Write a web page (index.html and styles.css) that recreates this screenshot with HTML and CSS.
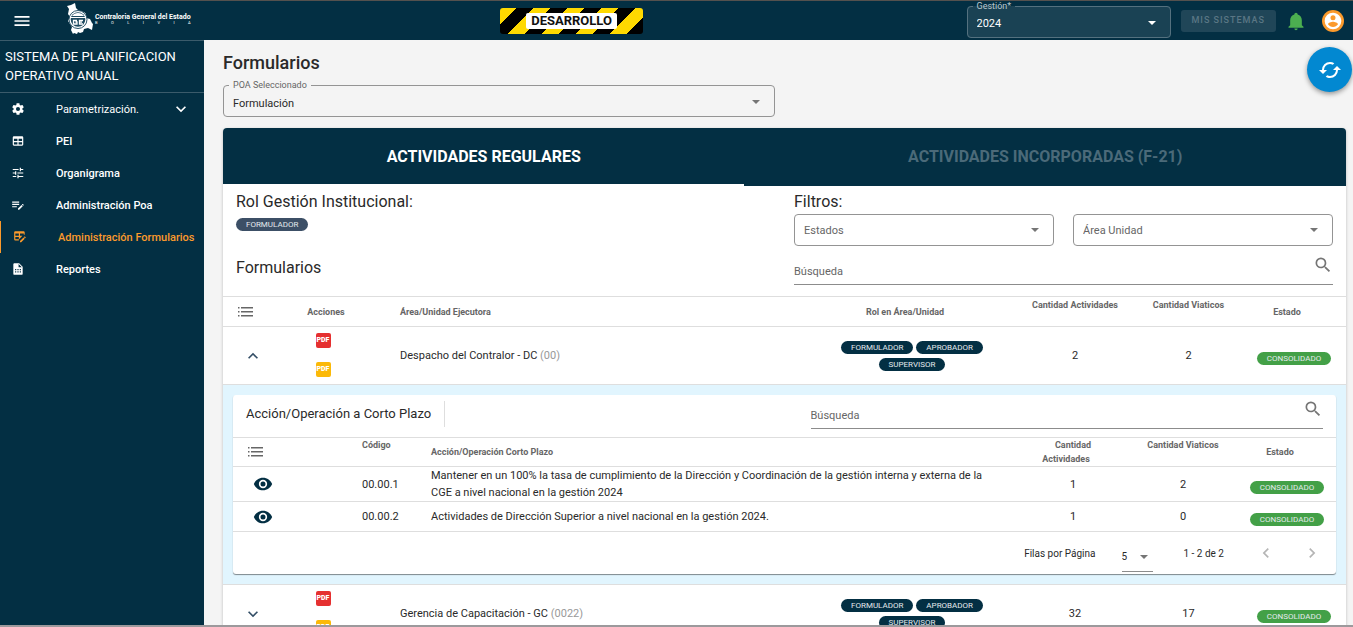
FILE: index.html
```html
<!DOCTYPE html>
<html lang="es">
<head>
<meta charset="utf-8">
<meta name="viewport" content="width=device-width, initial-scale=1">
<title>Sistema de Planificacion Operativo Anual</title>
<link rel="stylesheet" href="styles.css">
</head>
<body>
<svg class="sprite" aria-hidden="true">
  <symbol id="i-menu" viewBox="0 0 24 24"><path d="M3,6H21V8H3V6M3,11H21V13H3V11M3,16H21V18H3V16Z"/></symbol>
  <symbol id="i-cog" viewBox="0 0 24 24"><path d="M12,15.5A3.5,3.5 0 0,1 8.5,12A3.5,3.5 0 0,1 12,8.5A3.5,3.5 0 0,1 15.5,12A3.5,3.5 0 0,1 12,15.5M19.43,12.97C19.47,12.65 19.5,12.33 19.5,12C19.5,11.67 19.47,11.34 19.43,11L21.54,9.37C21.73,9.22 21.78,8.95 21.66,8.73L19.66,5.27C19.54,5.05 19.27,4.96 19.05,5.05L16.56,6.05C16.04,5.66 15.5,5.32 14.87,5.07L14.5,2.42C14.46,2.18 14.25,2 14,2H10C9.75,2 9.54,2.18 9.5,2.42L9.13,5.07C8.5,5.32 7.96,5.66 7.44,6.05L4.95,5.05C4.73,4.96 4.46,5.05 4.34,5.27L2.34,8.73C2.21,8.95 2.27,9.22 2.46,9.37L4.57,11C4.53,11.34 4.5,11.67 4.5,12C4.5,12.33 4.53,12.65 4.57,12.97L2.46,14.63C2.27,14.78 2.21,15.05 2.34,15.27L4.34,18.73C4.46,18.95 4.73,19.03 4.95,18.95L7.44,17.94C7.96,18.34 8.5,18.68 9.13,18.93L9.5,21.58C9.54,21.82 9.75,22 10,22H14C14.25,22 14.46,21.82 14.5,21.58L14.87,18.93C15.5,18.67 16.04,18.34 16.56,17.94L19.05,18.95C19.27,19.03 19.54,18.95 19.66,18.73L21.66,15.27C21.78,15.05 21.73,14.78 21.54,14.63L19.43,12.97Z"/></symbol>
  <symbol id="i-table" viewBox="0 0 24 24"><path d="M5,4H19A2,2 0 0,1 21,6V18A2,2 0 0,1 19,20H5A2,2 0 0,1 3,18V6A2,2 0 0,1 5,4M5,8V12H11V8H5M13,8V12H19V8H13M5,14V18H11V14H5M13,14V18H19V14H13Z"/></symbol>
  <symbol id="i-tune" viewBox="0 0 24 24"><path d="M3,17V19H9V17H3M3,5V7H13V5H3M13,21V19H21V17H13V15H11V21H13M7,9V11H3V13H7V15H9V9H7M21,13V11H11V13H21M15,9H17V7H21V5H17V3H15V9Z"/></symbol>
  <symbol id="i-list-edit" viewBox="0 0 24 24"><path d="M2,6V8H14V6H2M2,10V12H14V10H2M2,14V16H10V14H2M20.04,10.13C19.9,10.13 19.76,10.19 19.65,10.3L18.65,11.3L20.7,13.35L21.7,12.35C21.92,12.14 21.92,11.79 21.7,11.58L20.42,10.3C20.31,10.19 20.18,10.13 20.04,10.13M18.07,11.88L12,17.94V20H14.06L20.12,13.93L18.07,11.88Z"/></symbol>
  <symbol id="i-table-edit" viewBox="0 0 24 24"><path d="M21.7,13.35L20.7,14.35L18.65,12.3L19.65,11.3C19.86,11.09 20.21,11.09 20.42,11.3L21.7,12.58C21.91,12.79 21.91,13.14 21.7,13.35M12,18.94L18.07,12.88L20.12,14.93L14.06,21H12V18.94M4,2H18A2,2 0 0,1 20,4V8.17C19.5,8.06 19,8.1 18.5,8.27V6H12V10H16.17L12.17,14H12V14.17L10,16.17V18H4A2,2 0 0,1 2,16V4A2,2 0 0,1 4,2M4,6V10H10V6H4M4,12V16H10V12H4Z"/></symbol>
  <symbol id="i-file-table" viewBox="0 0 24 24"><path fill-rule="evenodd" d="M14,2H6C4.89,2 4,2.89 4,4V20A2,2 0 0,0 6,22H18A2,2 0 0,0 20,20V8L14,2M13,9V3.5L18.5,9H13M7,12H9V14H7V12M11,12H13V14H11V12M15,12H17V14H15V12M7,16H9V18H7V16M11,16H13V18H11V16M15,16H17V18H15V16Z"/></symbol>
  <symbol id="i-down" viewBox="0 0 24 24"><path d="M7.41,8.58L12,13.17L16.59,8.58L18,10L12,16L6,10L7.41,8.58Z"/></symbol>
  <symbol id="i-up" viewBox="0 0 24 24"><path d="M7.41,15.41L12,10.83L16.59,15.41L18,14L12,8L6,14L7.41,15.41Z"/></symbol>
  <symbol id="i-left" viewBox="0 0 24 24"><path d="M15.41,16.58L10.83,12L15.41,7.41L14,6L8,12L14,18L15.41,16.58Z"/></symbol>
  <symbol id="i-right" viewBox="0 0 24 24"><path d="M8.59,16.58L13.17,12L8.59,7.41L10,6L16,12L10,18L8.59,16.58Z"/></symbol>
  <symbol id="i-bell" viewBox="0 0 24 24"><path d="M21,19V20H3V19L5,17V11C5,7.9 7.03,5.17 10,4.29C10,4.19 10,4.1 10,4A2,2 0 0,1 12,2A2,2 0 0,1 14,4C14,4.1 14,4.19 14,4.29C16.97,5.17 19,7.9 19,11V17L21,19M14,21A2,2 0 0,1 12,23A2,2 0 0,1 10,21"/></symbol>
  <symbol id="i-account" viewBox="0 0 24 24"><path d="M12,19.2C9.5,19.2 7.29,17.92 6,16C6.03,14 10,12.9 12,12.9C14,12.9 17.97,14 18,16C16.71,17.92 14.5,19.2 12,19.2M12,5A3,3 0 0,1 15,8A3,3 0 0,1 12,11A3,3 0 0,1 9,8A3,3 0 0,1 12,5M12,2A10,10 0 0,0 2,12A10,10 0 0,0 12,22A10,10 0 0,0 22,12C22,6.47 17.5,2 12,2Z"/></symbol>
  <symbol id="i-cached" viewBox="0 0 24 24"><path d="M19,8L15,12H18A6,6 0 0,1 12,18C11,18 10.03,17.75 9.2,17.3L7.74,18.76C8.97,19.54 10.43,20 12,20A8,8 0 0,0 20,12H23M6,12A6,6 0 0,1 12,6C13,6 13.97,6.25 14.8,6.7L16.26,5.24C15.03,4.46 13.57,4 12,4A8,8 0 0,0 4,12H1L5,16L9,12"/></symbol>
  <symbol id="i-magnify" viewBox="0 0 24 24"><path d="M9.5,3A6.5,6.5 0 0,1 16,9.5C16,11.11 15.41,12.59 14.44,13.73L14.71,14H15.5L20.5,19L19,20.5L14,15.5V14.71L13.73,14.44C12.59,15.41 11.11,16 9.5,16A6.5,6.5 0 0,1 3,9.5A6.5,6.5 0 0,1 9.5,3M9.5,5C7,5 5,7 5,9.5C5,12 7,14 9.5,14C12,14 14,12 14,9.5C14,7 12,5 9.5,5Z"/></symbol>
  <symbol id="i-eye" viewBox="0 0 24 24"><path d="M12,9A3,3 0 0,0 9,12A3,3 0 0,0 12,15A3,3 0 0,0 15,12A3,3 0 0,0 12,9M12,17A5,5 0 0,1 7,12A5,5 0 0,1 12,7A5,5 0 0,1 17,12A5,5 0 0,1 12,17M12,4.5C7,4.5 2.73,7.61 1,12C2.73,16.39 7,19.5 12,19.5C17,19.5 21.27,16.39 23,12C21.27,7.61 17,4.5 12,4.5Z"/></symbol>
  <symbol id="i-list" viewBox="0 0 16 10"><path d="M0,0h1.5v1.5H0zM3,0h12v1.5H3zM0,4h1.5v1.5H0zM3,4h12v1.5H3zM0,8h1.5v1.5H0zM3,8h12v1.5H3z"/></symbol>
</svg>

<header class="topbar">
  <div class="topbar-start">
    <button class="icon-btn" aria-label="Menú"><svg class="icon icon-20"><use href="#i-menu"/></svg></button>
    <a class="brand" href="#">
      <svg class="brand-map" viewBox="0 0 27 31" aria-hidden="true">
        <path fill="#fff" d="M1 3l4-1 4-2 1 5 3 3 5 1 2 2v4l4 1 2 4 1 1-1 6-4-2-4 1-1 3-3 1-2-1-1 2-3-1-1 1-2-4 1-3-2-3-2-3 2-4-2-3 1-5z"/>
        <circle cx="12" cy="16.500" r="9" fill="#fff" stroke="#2b566b"/>
        <circle cx="12" cy="16.500" r="7.300" fill="#1d4a60"/>
        <path fill="#fff" d="M6 13q2-3 6-3t6 3zM4 14h16v1H4z"/>
        <path fill="none" stroke="#fff" stroke-width="1.300" d="M11 17.500H7.500v3.500H11v-2H9.500M17 17.500h-3.500V21H17M13.500 19.200H16"/>
      </svg>
      <span class="brand-text">
        <span class="brand-name">Contraloria General del Estado</span>
        <span class="brand-country"><span>B</span><span>O</span><span>L</span><span>I</span><span>V</span><span>I</span><span>A</span></span>
      </span>
    </a>
  </div>
  <div class="env-tape"><span class="env-label">DESARROLLO</span></div>
  <div class="topbar-tools">
    <fieldset class="field field-dark">
      <legend><label for="gestion">Gestión*</label></legend>
      <select id="gestion"><option>2024</option></select>
    </fieldset>
    <button class="systems-btn" disabled>MIS SISTEMAS</button>
    <button class="icon-btn bell-btn" aria-label="Notificaciones"><svg class="icon icon-20"><use href="#i-bell"/></svg></button>
    <button class="icon-btn avatar-btn" aria-label="Cuenta"><svg class="icon icon-20"><use href="#i-account"/></svg></button>
  </div>
</header>

<div class="layout">
  <nav class="sidebar" aria-label="Principal">
    <p class="system-name">SISTEMA DE PLANIFICACION OPERATIVO ANUAL</p>
    <ul class="nav-list">
      <li><a class="nav-item nav-group" href="#"><svg class="icon icon-14"><use href="#i-cog"/></svg><span>Parametrización.</span><svg class="icon icon-20 nav-chevron"><use href="#i-down"/></svg></a></li>
      <li><a class="nav-item" href="#"><svg class="icon icon-14"><use href="#i-table"/></svg><span>PEI</span></a></li>
      <li><a class="nav-item" href="#"><svg class="icon icon-14"><use href="#i-tune"/></svg><span>Organigrama</span></a></li>
      <li><a class="nav-item" href="#"><svg class="icon icon-14"><use href="#i-list-edit"/></svg><span>Administración Poa</span></a></li>
      <li><a class="nav-item is-active" href="#" aria-current="page"><svg class="icon icon-14"><use href="#i-table-edit"/></svg><span>Administración Formularios</span></a></li>
      <li><a class="nav-item" href="#"><svg class="icon icon-14"><use href="#i-file-table"/></svg><span>Reportes</span></a></li>
    </ul>
  </nav>

  <main class="content">
    <h1>Formularios</h1>
    <fieldset class="field poa-field">
      <legend><label for="poa">POA Seleccionado</label></legend>
      <select id="poa"><option>Formulación</option></select>
    </fieldset>

    <section class="card">
      <div class="tabs" role="tablist">
        <button class="tab is-selected" role="tab" aria-selected="true">ACTIVIDADES REGULARES</button>
        <button class="tab" role="tab" aria-selected="false">ACTIVIDADES INCORPORADAS (F-21)</button>
      </div>

      <div class="card-head">
        <div class="head-left">
          <h2>Rol Gestión Institucional:</h2>
          <span class="chip chip-slate">FORMULADOR</span>
          <h2 class="list-title">Formularios</h2>
        </div>
        <div class="head-right">
          <h2>Filtros:</h2>
          <div class="filters">
            <div class="field"><select aria-label="Estados"><option>Estados</option></select></div>
            <div class="field"><select aria-label="Área Unidad"><option>Área Unidad</option></select></div>
          </div>
          <div class="search"><input type="text" placeholder="Búsqueda" aria-label="Búsqueda"><svg class="icon icon-20"><use href="#i-magnify"/></svg></div>
        </div>
      </div>

      <table class="grid">
        <colgroup><col class="w-toggle"><col class="w-actions"><col><col class="w-role"><col class="w-activities"><col class="w-travel"><col class="w-status"></colgroup>
        <thead>
          <tr>
            <th class="list-cell"><svg class="icon list-icon" role="img" aria-label="Columnas"><use href="#i-list"/></svg></th>
            <th>Acciones</th>
            <th class="area-cell">Área/Unidad Ejecutora</th>
            <th class="sortable">Rol en Área/Unidad</th>
            <th class="sortable narrow">Cantidad Actividades</th>
            <th class="sortable narrow">Cantidad Viaticos</th>
            <th class="sortable">Estado</th>
          </tr>
        </thead>
        <tbody>
          <tr class="unit-row">
            <td><button class="icon-btn" aria-label="Contraer"><svg class="icon icon-20"><use href="#i-up"/></svg></button></td>
            <td><div class="pdf-stack"><button class="pdf pdf-red">PDF</button><button class="pdf pdf-amber">PDF</button></div></td>
            <td class="area-cell">Despacho del Contralor - DC <span class="code">(00)</span></td>
            <td><div class="chips"><span class="chip">FORMULADOR</span><span class="chip">APROBADOR</span><span class="chip">SUPERVISOR</span></div></td>
            <td>2</td>
            <td>2</td>
            <td class="status-cell"><span class="chip chip-green">CONSOLIDADO</span></td>
          </tr>
          <tr>
            <td class="expansion" colspan="7">
              <div class="subcard">
                <div class="subcard-head">
                  <h3>Acción/Operación a Corto Plazo</h3>
                  <div class="search"><input type="text" placeholder="Búsqueda" aria-label="Búsqueda de acciones"><svg class="icon icon-20"><use href="#i-magnify"/></svg></div>
                </div>
                <table class="grid subgrid">
                  <colgroup><col class="s-view"><col class="s-code"><col><col class="s-count"><col class="s-count"><col class="s-status"></colgroup>
                  <thead>
                    <tr>
                      <th class="list-cell"><svg class="icon list-icon" role="img" aria-label="Columnas"><use href="#i-list"/></svg></th>
                      <th class="sortable text-left code-head">Código</th>
                      <th class="text-left">Acción/Operación Corto Plazo</th>
                      <th class="sortable narrow">Cantidad Actividades</th>
                      <th class="sortable narrow">Cantidad Viaticos</th>
                      <th class="sortable">Estado</th>
                    </tr>
                  </thead>
                  <tbody>
                    <tr>
                      <td class="view-cell"><button class="icon-btn" aria-label="Ver 00.00.1"><svg class="icon icon-20"><use href="#i-eye"/></svg></button></td>
                      <td class="text-left">00.00.1</td>
                      <td class="text-left action-cell">Mantener en un 100% la tasa de cumplimiento de la Dirección y Coordinación de la gestión interna y externa de la CGE a nivel nacional en la gestión 2024</td>
                      <td>1</td>
                      <td>2</td>
                      <td class="status-cell"><span class="chip chip-green">CONSOLIDADO</span></td>
                    </tr>
                    <tr>
                      <td class="view-cell"><button class="icon-btn" aria-label="Ver 00.00.2"><svg class="icon icon-20"><use href="#i-eye"/></svg></button></td>
                      <td class="text-left">00.00.2</td>
                      <td class="text-left action-cell">Actividades de Dirección Superior a nivel nacional en la gestión 2024.</td>
                      <td>1</td>
                      <td>0</td>
                      <td class="status-cell"><span class="chip chip-green">CONSOLIDADO</span></td>
                    </tr>
                  </tbody>
                </table>
                <div class="pager">
                  <label for="rows">Filas por Página</label>
                  <div class="rows-select"><select id="rows"><option>5</option></select></div>
                  <span class="range">1 - 2 de 2</span>
                  <button class="icon-btn" aria-label="Anterior" disabled><svg class="icon icon-20"><use href="#i-left"/></svg></button>
                  <button class="icon-btn" aria-label="Siguiente" disabled><svg class="icon icon-20"><use href="#i-right"/></svg></button>
                </div>
              </div>
            </td>
          </tr>
          <tr class="unit-row">
            <td><button class="icon-btn" aria-label="Expandir"><svg class="icon icon-20"><use href="#i-down"/></svg></button></td>
            <td><div class="pdf-stack"><button class="pdf pdf-red">PDF</button><button class="pdf pdf-amber">PDF</button></div></td>
            <td class="area-cell">Gerencia de Capacitación - GC <span class="code">(0022)</span></td>
            <td><div class="chips"><span class="chip">FORMULADOR</span><span class="chip">APROBADOR</span><span class="chip">SUPERVISOR</span></div></td>
            <td>32</td>
            <td>17</td>
            <td class="status-cell"><span class="chip chip-green">CONSOLIDADO</span></td>
          </tr>
        </tbody>
      </table>
    </section>
  </main>
</div>

<button class="fab" aria-label="Recargar"><svg class="icon icon-24"><use href="#i-cached"/></svg></button>
</body>
</html>
```

FILE: styles.css
```css
:root {
  --navy: #032f43;
  --ink: #2a2a2a;
  --muted: #666;
  --line: #dedede;
  --green: #43a047;
  --orange: #fb9a2c;
}

* { box-sizing: border-box; }

body {
  margin: 0;
  height: 100vh;
  display: flex;
  flex-direction: column;
  overflow: hidden;
  border-top: 1px solid #55514e;
  border-bottom: 2px solid #9c999c;
  background: #f4f4f4;
  color: var(--ink);
  font: 11px/17px Roboto, "Liberation Sans", sans-serif;
}

h1, h2, h3, p, ul { margin: 0; padding: 0; font-weight: 400; }
ul { list-style: none; }
button, select, input { font: inherit; color: inherit; }
button { border: 0; padding: 0; background: none; cursor: pointer; }

.sprite { display: none; }
.icon { display: block; flex: none; fill: currentColor; }
.icon-14 { width: 14px; height: 14px; }
.icon-20 { width: 20px; height: 20px; }
.icon-24 { width: 24px; height: 24px; }
.icon-btn { display: inline-flex; align-items: center; justify-content: center; vertical-align: middle; }

/* Top bar */
.topbar {
  flex: none;
  height: 39px;
  display: flex;
  align-items: center;
  justify-content: space-between;
  padding: 0 9px 0 12px;
  background: var(--navy);
  color: #fff;
}
.topbar-start { display: flex; align-items: center; gap: 34px; }
.brand {
  display: flex;
  align-items: center;
  gap: 2px;
  padding-bottom: 4px;
  color: #fff;
  text-decoration: none;
}
.brand-map { width: 27px; height: 31px; }
.brand-text { display: flex; flex-direction: column; }
.brand-name { font-size: 7px; line-height: 8px; font-weight: 700; white-space: nowrap; }
.brand-country { display: flex; justify-content: space-between; font-size: 4px; line-height: 4px; }

.env-tape {
  padding: 5px 26px;
  border-radius: 3px;
  background: repeating-linear-gradient(135deg, #ffd900 0 12px, #000 12px 24px);
  display: flex;
}
.env-label {
  padding: 0 5px;
  border-radius: 2px;
  background: #fff;
  color: #111;
  font-size: 13px;
  line-height: 16px;
  font-weight: 700;
}
.topbar-tools { display: flex; align-items: center; gap: 10px; margin-left: 14px; }
.bell-btn { color: #4caf50; }
.avatar-btn { width: 22px; height: 22px; border-radius: 50%; background: #fb9a2c; margin-left: 6px; }

.systems-btn {
  height: 22px;
  padding: 0 11px;
  border-radius: 3px;
  background: #204658;
  color: #5a7684;
  font-size: 9px;
  font-weight: 500;
  letter-spacing: 1px;
}

/* Outlined fields */
.field {
  position: relative;
  min-width: 0;
  margin: 0;
  padding: 0;
  border: 1px solid #949494;
  border-radius: 4px;
}
.field legend {
  margin-left: 5px;
  padding: 0 4px;
  color: var(--muted);
  font-size: 9px;
  line-height: 9px;
}
.field legend label { display: block; }
.field select {
  display: block;
  width: 100%;
  height: 30px;
  padding: 0 32px 0 9px;
  border: 0;
  background: none;
  appearance: none;
  outline: 0;
}
.field::after, .rows-select::after {
  content: "";
  position: absolute;
  right: 14px;
  top: 50%;
  margin-top: -2px;
  border: 4px solid transparent;
  border-top-color: #757575;
  border-bottom: 0;
  pointer-events: none;
}
fieldset.field::after { margin-top: -3px; }
.field-dark { width: 204px; margin-top: -2px; border-color: #54717f; background: #1a4254; }
.field-dark select { height: 26px; }
.field-dark legend { color: #b8c6cd; }
.field-dark::after { border-top-color: #fff; }
.filters .field { color: var(--muted); }

/* Sidebar */
.layout { flex: 1; min-height: 0; display: flex; }
.sidebar { flex: none; width: 204px; background: var(--navy); color: #fff; border-top: 1px solid #3b5b6b; }
.system-name { padding: 6px 5px 7px; font-size: 13px; line-height: 19px; border-bottom: 1px solid #3b5b6b; }
.nav-item {
  display: flex;
  align-items: center;
  gap: 31px;
  height: 32px;
  padding: 0 13px 0 11px;
  color: #fff;
  font-weight: 500;
  text-decoration: none;
  white-space: nowrap;
}
.nav-group { font-weight: 400; }
.nav-chevron { margin-left: auto; }
.is-active { border-left: 1px solid var(--orange); color: var(--orange); padding: 0 0 0 12px; }

/* Content */
.content { flex: 1; min-width: 0; overflow: hidden; padding: 11px 7px 0 19px; }
h1 { font-size: 18px; line-height: 24px; font-weight: 500; }
.poa-field { width: 50%; max-width: 552px; margin: 6px 0 11px; }
.poa-field select { height: 26px; }

.card { background: #fff; border-radius: 4px; box-shadow: 0 1px 3px rgba(0, 0, 0, .25); }
.tabs { display: flex; background: var(--navy); border-radius: 4px 4px 0 0; }
.tab {
  flex: 1 1 auto;
  height: 58px;
  border-bottom: 2px solid transparent;
  color: #4b6a79;
  font-size: 16px;
  font-weight: 700;
}
.tab.is-selected { color: #fff; border-bottom-color: #fff; }

.card-head { display: grid; grid-template-columns: 1fr 1fr; gap: 19px; padding: 5px 13px 11px; }
h2 { font-size: 16px; line-height: 21px; }
.head-left { display: flex; flex-direction: column; align-items: flex-start; }
.head-left .chip { margin-top: 6px; }
.list-title { margin-top: 26px; }
.filters { display: grid; grid-template-columns: 1fr 1fr; gap: 19px; margin-top: 2px; }
.search { display: flex; align-items: flex-start; border-bottom: 1px solid #8c8c8c; }
.search input { flex: 1; min-width: 0; height: 17px; margin: 8px 0 4px; padding: 0; border: 0; background: none; outline: 0; }
.search input::placeholder { color: var(--muted); opacity: 1; }
.search .icon { color: #757575; }
.card-head .search { margin-top: 9px; }

/* Chips */
.chip {
  display: inline-block;
  padding: 1px 10px 0;
  border-radius: 7px;
  background: var(--navy);
  color: #e4eaed;
  font-size: 8px;
  line-height: 12px;
  white-space: nowrap;
}
.chip-slate { background: #3c4f66; }
.chip-green { background: var(--green); }
.chips { display: flex; flex-wrap: wrap; justify-content: center; gap: 4px 3px; }

/* Tables */
.grid { width: 100%; table-layout: fixed; border-collapse: collapse; }
.grid th, .grid td { padding: 0 8px; text-align: center; border-top: 1px solid var(--line); }
.grid th { height: 30px; color: var(--muted); font-size: 9px; line-height: 14px; font-weight: 700; }
.grid .sortable::after { content: ""; display: inline-block; width: 14px; height: 1px; }
.grid .narrow { padding: 0 13px; }
.grid .text-left, .grid .list-cell, .grid .area-cell { text-align: left; }
.grid .area-cell { padding-left: 31px; }
.grid .list-cell { padding-left: 15px; }
.grid .status-cell { padding-top: 4px; }
.list-icon { width: 16px; height: 10px; }
.w-toggle { width: 60px; }
.w-actions { width: 86px; }
.w-role { width: 206px; }
.w-activities { width: 120px; }
.w-travel { width: 107px; }
.w-status { width: 104px; }
.unit-row { height: 58px; }
.unit-row .icon-btn { color: #334e66; }
.code { color: #999; }
.pdf-stack { display: flex; flex-direction: column; align-items: center; gap: 14px; padding: 0 6px 2px 0; }
.pdf { width: 15px; height: 15px; border-radius: 2px; color: #fff; font-size: 7px; line-height: 15px; font-weight: 900; }
.pdf-red { background: #e53030; }
.pdf-amber { background: #fbb908; }

/* Expanded unit */
.grid .expansion { padding: 10px; background: #e1f5fe; }
.subcard { background: #fff; border-radius: 3px; box-shadow: 0 1px 1px rgba(0, 0, 0, .45); text-align: left; }
.subcard-head { display: flex; justify-content: space-between; align-items: flex-start; padding: 4px 13px 8px; }
h3 { font-size: 13px; line-height: 26px; padding-right: 13px; border-right: 1px solid var(--line); }
.subcard-head h3 { margin-top: 2px; }
.subcard-head .search { width: calc(50% - 26px); }
.subgrid { border-bottom: 1px solid var(--line); }
.subgrid th { height: 29px; }
.subgrid tbody tr { height: 30px; }
.subgrid .view-cell { text-align: left; padding-left: 20px; color: var(--navy); }
.subgrid .code-head { padding-right: 20px; }
.subgrid .action-cell { padding-right: 24px; }
.s-view { width: 121px; }
.s-code { width: 69px; }
.s-count { width: 110px; }
.s-status { width: 98px; }

.pager { display: flex; align-items: center; justify-content: flex-end; height: 42px; padding-right: 14px; font-size: 10px; }
.rows-select { position: relative; width: 31px; margin: 8px 31px 0 26px; border-bottom: 1px solid #8c8c8c; }
.rows-select select { width: 100%; height: 28px; padding: 0; border: 0; background: none; appearance: none; outline: 0; }
.rows-select::after { right: 5px; }
.range { margin-right: 32px; }
.pager .icon-btn { color: #b5b5b5; }
.pager .icon-btn + .icon-btn { margin-left: 26px; }

.fab {
  position: fixed;
  top: 47px;
  right: 1px;
  width: 45px;
  height: 45px;
  display: flex;
  align-items: center;
  justify-content: center;
  border-radius: 50%;
  background: #0288d1;
  color: #fff;
  box-shadow: 0 2px 5px rgba(0, 0, 0, .4);
}
```
